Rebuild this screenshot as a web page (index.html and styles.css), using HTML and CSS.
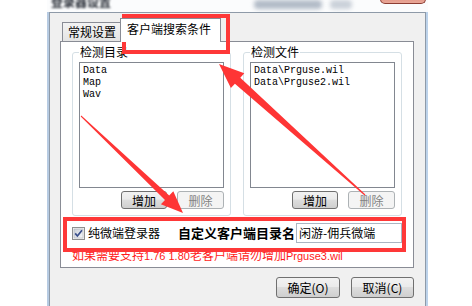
FILE: index.html
```html
<!DOCTYPE html>
<html>
<head>
<meta charset="utf-8">
<link rel="stylesheet" href="styles.css">
</head>
<body>
<div class="window">
  <div class="titlebar">
    <span class="title">登录器设置</span>
    <span class="glow glow-a"></span>
    <span class="glow glow-b"></span>
    <span class="close"></span>
  </div>
  <div class="frame">
    <div class="client">
      <div class="tabs">
        <div class="tab">常规设置</div>
        <div class="tab active">客户端搜索条件</div>
      </div>
      <div class="page">
        <div class="groups">
          <div class="group">
            <div class="group-title">检测目录</div>
            <div class="list"><div>Data</div><div>Map</div><div>Wav</div></div>
            <div class="btns">
              <button class="btn w46">增加</button>
              <button class="btn w47" disabled>删除</button>
            </div>
          </div>
          <div class="group">
            <div class="group-title">检测文件</div>
            <div class="list"><div>Data\Prguse.wil</div><div>Data\Prguse2.wil</div></div>
            <div class="btns">
              <button class="btn w46">增加</button>
              <button class="btn w47" disabled>删除</button>
            </div>
          </div>
        </div>
        <div class="opts">
          <span class="check">
            <svg width="13" height="13" viewBox="0 0 13 13">
              <defs>
                <linearGradient id="cb" x1="0" y1="0" x2="1" y2="1">
                  <stop offset="0" stop-color="#cbd0d8"/>
                  <stop offset="1" stop-color="#f6f7f9"/>
                </linearGradient>
              </defs>
              <rect x="0.5" y="0.5" width="12" height="12" fill="#f4f4f4" stroke="#8e8f8f"/>
              <rect x="2" y="2" width="9" height="9" fill="url(#cb)" stroke="#aeb3b9" stroke-width="0.6"/>
              <path d="M3.2 6.4 L5.4 9 L10 3.3" fill="none" stroke="#3a4f8c" stroke-width="1.7"/>
            </svg>
          </span>
          <span class="check-label">纯微端登录器</span>
          <span class="dir-label">自定义客户端目录名</span>
          <span class="input">闲游-佣兵微端</span>
        </div>
        <div class="note">如果需要支持<span class="latin">1.76 1.80</span>老客户端请勿增加<span class="latin">Prguse3.wil</span></div>
      </div>
      <div class="footer">
        <button class="btn big w64">确定(O)</button>
        <button class="btn big w63">取消(C)</button>
      </div>
    </div>
  </div>
</div>

<div class="mark mark-tab"></div>
<div class="mark mark-opts"></div>

<svg class="arrows" width="472" height="306" viewBox="0 0 472 306">
  <polygon fill="#fe3535" points="81.3,115.6 169.2,195.6 173.3,191.3 183,213 160.9,204.3 165,200 80.7,116.4"/>
  <polygon fill="#fe3535" points="365.4,194.6 240.3,77.7 244.3,73.3 219,64 230.9,88.1 234.9,83.7 364.6,195.4"/>
</svg>
</body>
</html>
```

FILE: styles.css
```css
* { box-sizing: border-box; }

html, body {
  margin: 0;
  padding: 0;
}

body {
  width: 472px;
  height: 306px;
  overflow: hidden;
  position: relative;
  background: #ffffff;
  font-family: "Noto Sans CJK SC", "Liberation Sans", sans-serif;
  font-size: 12px;
  color: #000;
}

.window {
  margin-left: 47px;
  width: 381px;
  display: flex;
  flex-direction: column;
}

.titlebar {
  height: 12px;
  display: flex;
  align-items: flex-start;
  overflow: hidden;
  background: #fbfcfd;
}

.title {
  margin: -5px 0 0 4px;
  line-height: 14px;
  font-size: 12px;
  font-weight: bold;
  color: #2a2f38;
  filter: blur(1.1px);
}

.glow {
  height: 9px;
  background: #9aa6b6;
  border-radius: 4px;
  filter: blur(2px);
  opacity: 0.75;
}

.glow-a { width: 68px; margin-left: 143px; }
.glow-b { width: 22px; margin-left: 8px; opacity: 0.5; }

.close {
  width: 46px;
  height: 18px;
  margin: -14px 2px 0 auto;
  background: linear-gradient(#d0665a, #e9a898);
  border: 1px solid #8c3d33;
  border-top: none;
  border-radius: 0 0 5px 5px;
}

.frame {
  border-left: 2px solid #b7cbe2;
  border-right: 2px solid #bcd2ea;
}

.client {
  height: 300px;
  border: 1px solid #8e9aa8;
  background: #f0f0f0;
  padding: 5px 11px 0 10px;
}

.tabs {
  display: flex;
  align-items: flex-end;
  height: 23px;
  padding-left: 2px;
}

.tab {
  width: 60px;
  height: 19px;
  border: 1px solid #898c95;
  border-bottom: none;
  background: linear-gradient(#f3f3f3, #e4e4e4);
  text-align: center;
  line-height: 16px;
  padding-top: 1px;
  white-space: nowrap;
}

.tab.active {
  width: 101px;
  height: 24px;
  margin-left: -2px;
  margin-bottom: -1px;
  background: #ffffff;
  position: relative;
  z-index: 1;
  line-height: 18px;
  padding-top: 1px;
  text-align: left;
  padding-left: 6px;
}

.page {
  height: 227px;
  border: 1px solid #898c95;
  background: #ffffff;
  padding-left: 11px;
}

.groups {
  display: flex;
  gap: 12px;
  padding-top: 10px;
}

.group {
  width: 159px;
  border: 1px solid #d5dfe5;
  border-radius: 3px;
  padding: 0 6px 6px 6px;
}

.group-title {
  width: fit-content;
  margin-top: -8px;
  padding: 0 1px;
  line-height: 14px;
  background: #ffffff;
}

.list {
  height: 126px;
  margin-top: 3px;
  border: 1px solid #828790;
  background: #ffffff;
  padding: 2px 3px;
  font-family: "Liberation Mono", monospace;
  font-size: 10px;
  line-height: 12px;
  white-space: nowrap;
}

.btns {
  display: flex;
  justify-content: flex-end;
  gap: 10px;
  margin-top: 3px;
}

.btn {
  height: 18px;
  padding: 0;
  margin: 0;
  border: 1px solid #707070;
  border-radius: 3px;
  background: linear-gradient(#f2f2f2 0%, #ebebeb 45%, #dddddd 50%, #cfcfcf 100%);
  font-family: "Noto Sans CJK SC", "Liberation Sans", sans-serif;
  font-size: 12px;
  line-height: 15px;
  color: #000;
  text-align: center;
}

.btn:disabled {
  border-color: #adb2b5;
  background: #f4f4f4;
  color: #838383;
}

.w46 { width: 46px; }
.w47 { width: 47px; }
.w63 { width: 63px; }
.w64 { width: 64px; }

.btn.big {
  height: 21px;
  line-height: 18px;
}

.opts {
  display: flex;
  align-items: center;
  height: 20px;
  margin-top: 7px;
}

.check {
  width: 13px;
  height: 13px;
  display: flex;
}

.check-label {
  margin-left: 3px;
  line-height: 14px;
}

.dir-label {
  margin-left: 18px;
  font-size: 13px;
  font-weight: bold;
  line-height: 16px;
}

.input {
  width: 106px;
  height: 20px;
  margin-left: 1px;
  border: 1px solid #abb5c2;
  background: #ffffff;
  padding-left: 2px;
  line-height: 18px;
  white-space: nowrap;
}

.note {
  margin-top: 5px;
  color: #ff1a1a;
  line-height: 14px;
  white-space: nowrap;
}

.note .latin {
  font-family: "Liberation Sans", sans-serif;
  font-size: 11px;
}

.footer {
  display: flex;
  justify-content: flex-end;
  gap: 11px;
  margin-top: 9px;
}

.mark {
  position: absolute;
  border: 4px solid #fe3838;
}

.mark-tab {
  left: 122px;
  top: 14px;
  width: 108px;
  height: 40px;
}

.mark-opts {
  left: 63px;
  top: 217px;
  width: 343px;
  height: 35px;
}

.arrows {
  position: absolute;
  left: 0;
  top: 0;
}
```
